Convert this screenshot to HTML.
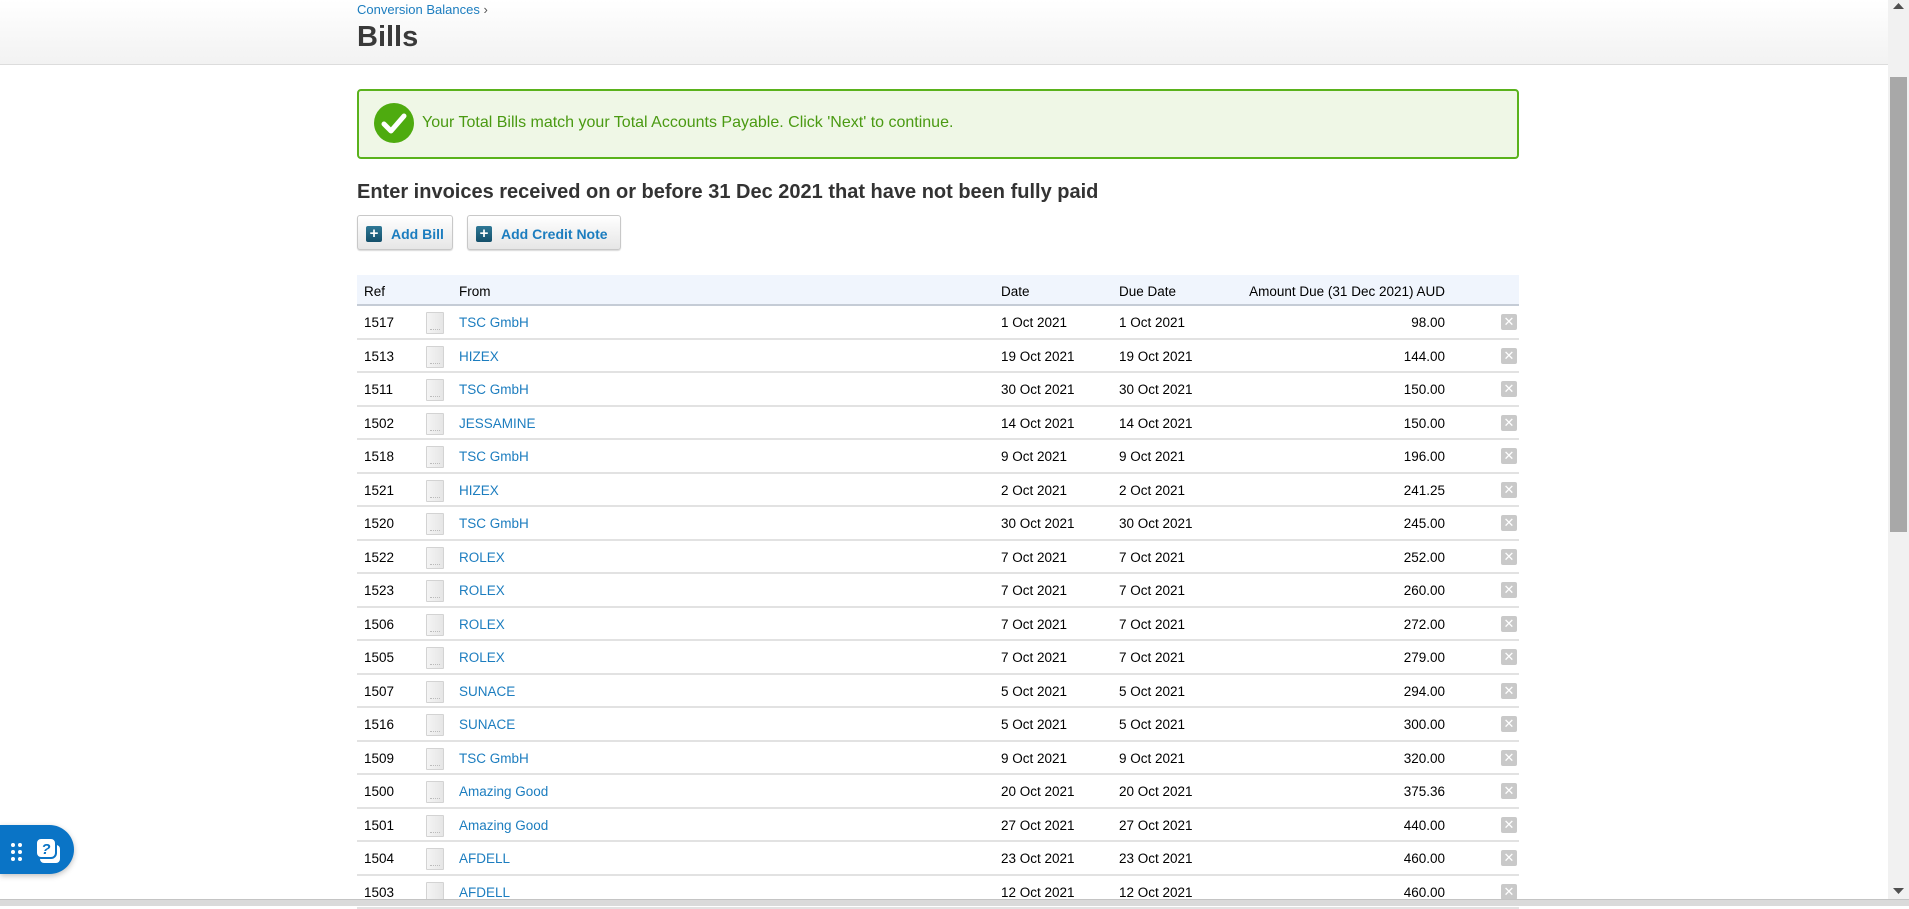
<!DOCTYPE html>
<html><head><meta charset="utf-8"><style>
*{box-sizing:border-box;margin:0;padding:0}
body{width:1909px;height:906px;overflow:hidden;background:#fff;font-family:"Liberation Sans",Tahoma,sans-serif;position:relative;color:#000}
.hdr{position:absolute;left:0;top:0;width:1888px;height:65px;background:linear-gradient(#fff,#f2f2f2);border-bottom:1px solid #dcdcdc}
.bc{position:absolute;left:357px;top:2px;font-size:13px;color:#1c7dbf}
.bc span{color:#555}
h1{position:absolute;left:357px;top:21px;font-size:29px;font-weight:bold;color:#3a3a3a}
.ok{position:absolute;left:357px;top:89px;width:1162px;height:70px;border:2px solid #5ab21c;border-radius:4px;background:#eff7e6}
.ok .c{position:absolute;left:15px;top:12px;width:40px;height:40px;border-radius:50%;background:#4eab0f}
.ok .t{position:absolute;left:63px;top:23px;font-size:16px;color:#4a9a12}
h2{position:absolute;left:357px;top:181px;font-size:20px;font-weight:bold;color:#333}
.btn{position:absolute;top:215px;height:35px;border:1px solid #c8c8c8;border-radius:3px;background:linear-gradient(#fff,#e6e6e6);box-shadow:0 1px 1px rgba(0,0,0,.15);font-size:14px;font-weight:bold;color:#1c7dbf;padding:10px 0 0 33px}
.btn i{position:absolute;left:8px;top:10px;width:16px;height:16px;background:linear-gradient(#2e7896,#134f6a);border-radius:2px;color:#fff;font-style:normal;font-size:15px;line-height:15px;text-align:center;font-weight:bold}
.th{position:absolute;left:357px;top:275px;width:1162px;height:31px;background:#f0f5fd;border-bottom:2px solid #c5ccd6;font-size:13.5px}
.row{position:absolute;left:357px;width:1162px;height:33.5px;border-bottom:2px solid #e2e2e2;font-size:13.5px}
.th span,.row span{position:absolute;top:9px;white-space:nowrap}
.a{color:#1c7dbf}
.doc{position:absolute;left:69px;top:6px;width:18px;height:22px;background:linear-gradient(90deg,#f4f4f4,#e6e6e6);border:1px solid #d3d3d3;border-radius:1px}
.doc:after{content:"";position:absolute;left:3px;right:3px;bottom:3px;border-bottom:1px dotted #bbb}
.x{position:absolute;left:1144px;top:8px;width:16px;height:16px;background:#c9c9c9;border-radius:2px;color:#fff;font-size:13px;line-height:16px;text-align:center}
.sb{position:absolute;left:1888px;top:0;width:21px;height:899px;background:#f1f1f1;z-index:5}
.th1{position:absolute;left:1890px;top:77px;width:17px;height:455px;background:#a8a8a8;z-index:6}
.bot{position:absolute;left:0;top:899px;width:1909px;height:7px;background:#dadada;border-top:1px solid #c4c4c4;z-index:6}
.help{position:absolute;left:0;top:825px;width:74px;height:49px;background:#0a74c6;border-radius:0 25px 25px 0;box-shadow:0 2px 6px rgba(0,0,0,.25);z-index:6}
</style></head><body>
<div class="hdr"></div>
<div class="bc">Conversion Balances <span>›</span></div>
<h1>Bills</h1>
<div class="ok"><div class="c"><svg width="40" height="40" viewBox="0 0 40 40"><path d="M10 21l7 7 13-15" fill="none" stroke="#fff" stroke-width="5" stroke-linecap="round" stroke-linejoin="round"/></svg></div><div class="t">Your Total Bills match your Total Accounts Payable. Click 'Next' to continue.</div></div>
<h2>Enter invoices received on or before 31 Dec 2021 that have not been fully paid</h2>
<div class="btn" style="left:357px;width:96px"><i>+</i>Add Bill</div>
<div class="btn" style="left:467px;width:154px"><i>+</i>Add Credit Note</div>
<div class="th"><span style="left:7px">Ref</span><span style="left:102px">From</span><span style="left:644px">Date</span><span style="left:762px">Due Date</span><span style="right:74px">Amount Due (31 Dec 2021) AUD</span></div>
<div class="row" style="top:306px"><span style="left:7px">1517</span><div class="doc"></div><span class="a" style="left:102px">TSC GmbH</span><span style="left:644px">1 Oct 2021</span><span style="left:762px">1 Oct 2021</span><span style="right:74px">98.00</span><div class="x">✕</div></div>
<div class="row" style="top:339.5px"><span style="left:7px">1513</span><div class="doc"></div><span class="a" style="left:102px">HIZEX</span><span style="left:644px">19 Oct 2021</span><span style="left:762px">19 Oct 2021</span><span style="right:74px">144.00</span><div class="x">✕</div></div>
<div class="row" style="top:373px"><span style="left:7px">1511</span><div class="doc"></div><span class="a" style="left:102px">TSC GmbH</span><span style="left:644px">30 Oct 2021</span><span style="left:762px">30 Oct 2021</span><span style="right:74px">150.00</span><div class="x">✕</div></div>
<div class="row" style="top:406.5px"><span style="left:7px">1502</span><div class="doc"></div><span class="a" style="left:102px">JESSAMINE</span><span style="left:644px">14 Oct 2021</span><span style="left:762px">14 Oct 2021</span><span style="right:74px">150.00</span><div class="x">✕</div></div>
<div class="row" style="top:440px"><span style="left:7px">1518</span><div class="doc"></div><span class="a" style="left:102px">TSC GmbH</span><span style="left:644px">9 Oct 2021</span><span style="left:762px">9 Oct 2021</span><span style="right:74px">196.00</span><div class="x">✕</div></div>
<div class="row" style="top:473.5px"><span style="left:7px">1521</span><div class="doc"></div><span class="a" style="left:102px">HIZEX</span><span style="left:644px">2 Oct 2021</span><span style="left:762px">2 Oct 2021</span><span style="right:74px">241.25</span><div class="x">✕</div></div>
<div class="row" style="top:507px"><span style="left:7px">1520</span><div class="doc"></div><span class="a" style="left:102px">TSC GmbH</span><span style="left:644px">30 Oct 2021</span><span style="left:762px">30 Oct 2021</span><span style="right:74px">245.00</span><div class="x">✕</div></div>
<div class="row" style="top:540.5px"><span style="left:7px">1522</span><div class="doc"></div><span class="a" style="left:102px">ROLEX</span><span style="left:644px">7 Oct 2021</span><span style="left:762px">7 Oct 2021</span><span style="right:74px">252.00</span><div class="x">✕</div></div>
<div class="row" style="top:574px"><span style="left:7px">1523</span><div class="doc"></div><span class="a" style="left:102px">ROLEX</span><span style="left:644px">7 Oct 2021</span><span style="left:762px">7 Oct 2021</span><span style="right:74px">260.00</span><div class="x">✕</div></div>
<div class="row" style="top:607.5px"><span style="left:7px">1506</span><div class="doc"></div><span class="a" style="left:102px">ROLEX</span><span style="left:644px">7 Oct 2021</span><span style="left:762px">7 Oct 2021</span><span style="right:74px">272.00</span><div class="x">✕</div></div>
<div class="row" style="top:641px"><span style="left:7px">1505</span><div class="doc"></div><span class="a" style="left:102px">ROLEX</span><span style="left:644px">7 Oct 2021</span><span style="left:762px">7 Oct 2021</span><span style="right:74px">279.00</span><div class="x">✕</div></div>
<div class="row" style="top:674.5px"><span style="left:7px">1507</span><div class="doc"></div><span class="a" style="left:102px">SUNACE</span><span style="left:644px">5 Oct 2021</span><span style="left:762px">5 Oct 2021</span><span style="right:74px">294.00</span><div class="x">✕</div></div>
<div class="row" style="top:708px"><span style="left:7px">1516</span><div class="doc"></div><span class="a" style="left:102px">SUNACE</span><span style="left:644px">5 Oct 2021</span><span style="left:762px">5 Oct 2021</span><span style="right:74px">300.00</span><div class="x">✕</div></div>
<div class="row" style="top:741.5px"><span style="left:7px">1509</span><div class="doc"></div><span class="a" style="left:102px">TSC GmbH</span><span style="left:644px">9 Oct 2021</span><span style="left:762px">9 Oct 2021</span><span style="right:74px">320.00</span><div class="x">✕</div></div>
<div class="row" style="top:775px"><span style="left:7px">1500</span><div class="doc"></div><span class="a" style="left:102px">Amazing Good</span><span style="left:644px">20 Oct 2021</span><span style="left:762px">20 Oct 2021</span><span style="right:74px">375.36</span><div class="x">✕</div></div>
<div class="row" style="top:808.5px"><span style="left:7px">1501</span><div class="doc"></div><span class="a" style="left:102px">Amazing Good</span><span style="left:644px">27 Oct 2021</span><span style="left:762px">27 Oct 2021</span><span style="right:74px">440.00</span><div class="x">✕</div></div>
<div class="row" style="top:842px"><span style="left:7px">1504</span><div class="doc"></div><span class="a" style="left:102px">AFDELL</span><span style="left:644px">23 Oct 2021</span><span style="left:762px">23 Oct 2021</span><span style="right:74px">460.00</span><div class="x">✕</div></div>
<div class="row" style="top:875.5px"><span style="left:7px">1503</span><div class="doc"></div><span class="a" style="left:102px">AFDELL</span><span style="left:644px">12 Oct 2021</span><span style="left:762px">12 Oct 2021</span><span style="right:74px">460.00</span><div class="x">✕</div></div>
<div class="sb"><svg style="position:absolute;left:5px;top:3px" width="11" height="6"><path d="M0 6L5.5 0 11 6z" fill="#505050"/></svg><svg style="position:absolute;left:5px;top:888px" width="11" height="6"><path d="M0 0L5.5 6 11 0z" fill="#505050"/></svg></div>
<div class="th1"></div>
<div class="bot"></div>
<div class="help"><svg width="74" height="49" viewBox="0 0 74 49"><g fill="#fff"><circle cx="13" cy="20" r="2"/><circle cx="20" cy="20" r="2"/><circle cx="13" cy="27" r="2"/><circle cx="20" cy="27" r="2"/><circle cx="13" cy="34" r="2"/><circle cx="20" cy="34" r="2"/><rect x="40" y="20" width="20" height="18" rx="4"/></g><rect x="36" y="13" width="20" height="20" rx="5" fill="#fff" stroke="#0a74c6" stroke-width="2"/><text x="46" y="29" font-family="Liberation Sans" font-weight="bold" font-style="italic" font-size="15" fill="#0a74c6" text-anchor="middle">?</text></svg></div>
</body></html>
